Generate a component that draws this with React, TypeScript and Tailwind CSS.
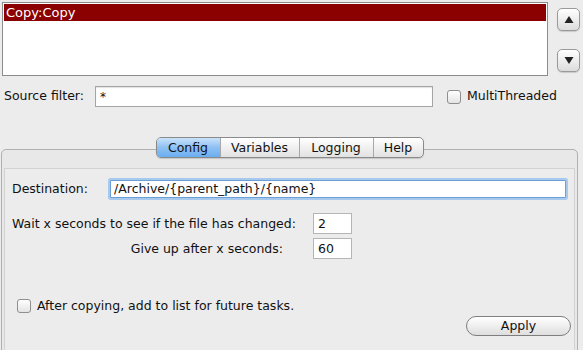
import { useState } from 'react';

const tabs = ['Config', 'Variables', 'Logging', 'Help'];

function ArrowButton({ dir }: { dir: 'up' | 'down' }) {
  return (
    <button className="w-[23px] h-[23px] rounded-[5px] border border-[#9a9a9a] bg-gradient-to-b from-[#ffffff] to-[#dcdcdc] flex items-center justify-center shadow-[0_1px_1px_rgba(0,0,0,0.15)]">
      <svg width="10" height="9" viewBox="0 0 10 9">
        {dir === 'up' ? <path d="M5 1 L9.5 8 L0.5 8 Z" fill="#222" /> : <path d="M0.5 1 L9.5 1 L5 8 Z" fill="#222" />}
      </svg>
    </button>
  );
}

function Checkbox({ label }: { label: string }) {
  return (
    <label className="flex items-center gap-[6px] whitespace-nowrap">
      <span className="w-[14px] h-[14px] rounded-[3px] border border-[#8e8e8e] bg-gradient-to-b from-[#ffffff] to-[#e4e4e4]" />
      <span>{label}</span>
    </label>
  );
}

export default function App() {
  const [tab, setTab] = useState('Config');

  return (
    <div className="w-[583px] h-[350px] overflow-hidden bg-[#ececec] text-[12.5px] text-[#111] font-['DejaVu_Sans',sans-serif]">
      {/* Task list */}
      <div className="flex pt-[2px] pl-[2px]">
        <div className="w-[546px] h-[74px] border border-[#8c8c8c] bg-white p-[1px]">
          <div className="h-[17px] bg-[#8b0000] text-white pl-[2px] leading-[17px] text-[13px]">Copy:Copy</div>
        </div>
        <div className="ml-[9px] mt-[6px] flex flex-col gap-[18px]">
          <ArrowButton dir="up" />
          <ArrowButton dir="down" />
        </div>
      </div>

      {/* Source filter */}
      <div className="flex items-center mt-[10px] pl-[4px]">
        <span className="w-[91px]">Source filter:</span>
        <input
          defaultValue="*"
          className="w-[338px] h-[21px] border border-[#a5a5a5] bg-white px-[4px] text-[12px] outline-none shadow-[inset_0_1px_1px_rgba(0,0,0,0.12)]"
        />
        <div className="ml-[14px]">
          <Checkbox label="MultiThreaded" />
        </div>
      </div>

      {/* Tabbed panel */}
      <div className="mt-[42px] ml-[1px] w-[577px] h-[220px] border border-[#b0b0b0] rounded-t-[5px] bg-[#e8e8e8] px-[2px]">
        <div className="flex justify-center -mt-[13px]">
          <div className="flex h-[21px] rounded-[5px] border border-[#8a8a8a] bg-gradient-to-b from-[#ffffff] to-[#e2e2e2] overflow-hidden shadow-[0_1px_1px_rgba(0,0,0,0.15)]">
            {tabs.map((t, i) => (
              <button
                key={t}
                onClick={() => setTab(t)}
                className={`h-full leading-[19px] ${i > 0 ? 'border-l border-[#a8a8a8]' : ''} ${
                  t === tab ? 'bg-gradient-to-b from-[#c9e2fb] via-[#8ec0f3] to-[#6aaef0]' : ''
                } ${i === 0 ? 'w-[63px]' : i === 1 ? 'w-[79px]' : i === 2 ? 'w-[74px]' : 'w-[50px]'}`}
              >
                {t}
              </button>
            ))}
          </div>
        </div>

        <div className="mt-[10px] h-[200px] border border-[#d2d2d2] bg-[#ececec] pt-[11px] pl-[7px] pr-[3px]">
          <div className="flex items-center pr-[5px]">
            <span className="w-[98px]">Destination:</span>
            <input
              defaultValue="/Archive/{parent_path}/{name}"
              className="flex-1 h-[18px] rounded-[1px] border border-[#6a9fd8] bg-white px-[3px] outline-none shadow-[0_0_0_2px_#a8c9ee]"
            />
          </div>

          <div className="flex mt-[14px]">
            <div className="w-[301px] flex flex-col items-end whitespace-nowrap">
              <span className="self-start leading-[21px]">Wait x seconds to see if the file has changed:</span>
              <span className="mt-[4px] mr-[30px] leading-[21px]">Give up after x seconds:</span>
            </div>
            <div className="flex flex-col gap-[4px]">
              <input defaultValue="2" className="w-[39px] h-[21px] border border-[#b5b5b5] bg-white px-[4px] outline-none" />
              <input defaultValue="60" className="w-[39px] h-[21px] border border-[#b5b5b5] bg-white px-[4px] outline-none" />
            </div>
          </div>

          <div className="mt-[38px] pl-[5px]">
            <Checkbox label="After copying, add to list for future tasks." />
          </div>

          <div className="flex justify-end">
            <button className="w-[105px] h-[20px] rounded-full border border-[#7e7e7e] bg-gradient-to-b from-[#ffffff] to-[#dedede] leading-[18px]">
              Apply
            </button>
          </div>
        </div>
      </div>
    </div>
  );
}
